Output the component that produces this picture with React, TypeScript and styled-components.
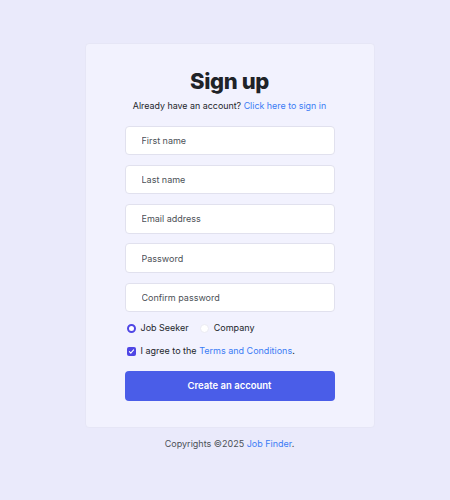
import styled, { createGlobalStyle } from 'styled-components'

const GlobalStyle = createGlobalStyle`
  html, body {
    margin: 0;
    padding: 0;
    background: #eaeafb;
    font-family: Inter, "Noto Sans", sans-serif;
  }
  * { box-sizing: border-box; }
`

const Page = styled.div`
  width: 450px;
  min-height: 500px;
  display: flex;
  flex-direction: column;
  align-items: center;
  padding: 43px 0 0 9px;
`

const Card = styled.form`
  width: 290px;
  background: #f2f2fe;
  border: 1px solid #e6e6f6;
  border-radius: 4px;
  padding: 23px 39px 26px 39px;
  display: flex;
  flex-direction: column;
`

const Title = styled.h1`
  margin: 0;
  font-size: 22px;
  line-height: 28px;
  font-weight: 800;
  letter-spacing: -0.4px;
  color: #1f2328;
  text-align: center;
`

const Subtitle = styled.p`
  margin: 3.5px 0 13px;
  font-size: 8.9px;
  line-height: 14px;
  color: #22262c;
  text-align: center;
  white-space: nowrap;
`

const Link = styled.a`
  color: #3a7cf5;
  text-decoration: none;
`

const Fields = styled.div`
  display: flex;
  flex-direction: column;
  gap: 9.75px;
`

const Input = styled.input`
  width: 100%;
  height: 29.5px;
  border: 1px solid #e1e1ee;
  border-radius: 4px;
  background: #ffffff;
  padding: 0 16px;
  font-family: inherit;
  font-size: 9px;
  color: #333;
  outline: none;
  &::placeholder {
    color: #4c5157;
  }
`

const RadioRow = styled.div`
  display: flex;
  align-items: center;
  gap: 11px;
  margin-top: 9px;
  padding-left: 2px;
`

const Choice = styled.label`
  display: flex;
  align-items: center;
  gap: 5px;
  font-size: 9px;
  line-height: 14px;
  color: #22262c;
`

const RadioDot = styled.span<{ $checked?: boolean }>`
  width: 9px;
  height: 9px;
  border-radius: 50%;
  background: #fff;
  border: ${({ $checked }) => ($checked ? '2.5px solid #4f46e5' : '1px solid #ebebf3')};
`

const AgreeRow = styled.label`
  display: flex;
  align-items: center;
  margin-top: 9px;
  padding-left: 2px;
  font-size: 9px;
  line-height: 14px;
  color: #22262c;
  white-space: pre;
`

const CheckBox = styled.span`
  width: 9px;
  height: 9px;
  margin-right: 5px;
  border-radius: 2px;
  background: #4f46e5;
  display: flex;
  align-items: center;
  justify-content: center;
`

const Submit = styled.button`
  margin-top: 13px;
  height: 29.5px;
  border: none;
  border-radius: 4px;
  background: #4a5de8;
  color: #ffffff;
  font-family: inherit;
  font-size: 9.5px;
  font-weight: 600;
`

const Footer = styled.p`
  margin: 9px 0 0;
  font-size: 9px;
  line-height: 14px;
  color: #4c5157;
  text-align: center;
`

export default function App() {
  return (
    <>
      <GlobalStyle />
      <Page>
        <Card onSubmit={(e) => e.preventDefault()}>
          <Title>Sign up</Title>
          <Subtitle>
            Already have an account? <Link href="#">Click here to sign in</Link>
          </Subtitle>
          <Fields>
            <Input placeholder="First name" />
            <Input placeholder="Last name" />
            <Input placeholder="Email address" />
            <Input placeholder="Password" type="password" />
            <Input placeholder="Confirm password" type="password" />
          </Fields>
          <RadioRow>
            <Choice>
              <RadioDot $checked />
              Job Seeker
            </Choice>
            <Choice>
              <RadioDot />
              Company
            </Choice>
          </RadioRow>
          <AgreeRow>
            <CheckBox>
              <svg width="7" height="7" viewBox="0 0 10 10">
                <path d="M2 5.2l2 2 4-4.4" fill="none" stroke="#fff" strokeWidth="1.6" strokeLinecap="round" strokeLinejoin="round" />
              </svg>
            </CheckBox>
            I agree to the <Link href="#">Terms and Conditions</Link>.
          </AgreeRow>
          <Submit type="submit">Create an account</Submit>
        </Card>
        <Footer>
          Copyrights ©2025 <Link href="#">Job Finder</Link>.
        </Footer>
      </Page>
    </>
  )
}
